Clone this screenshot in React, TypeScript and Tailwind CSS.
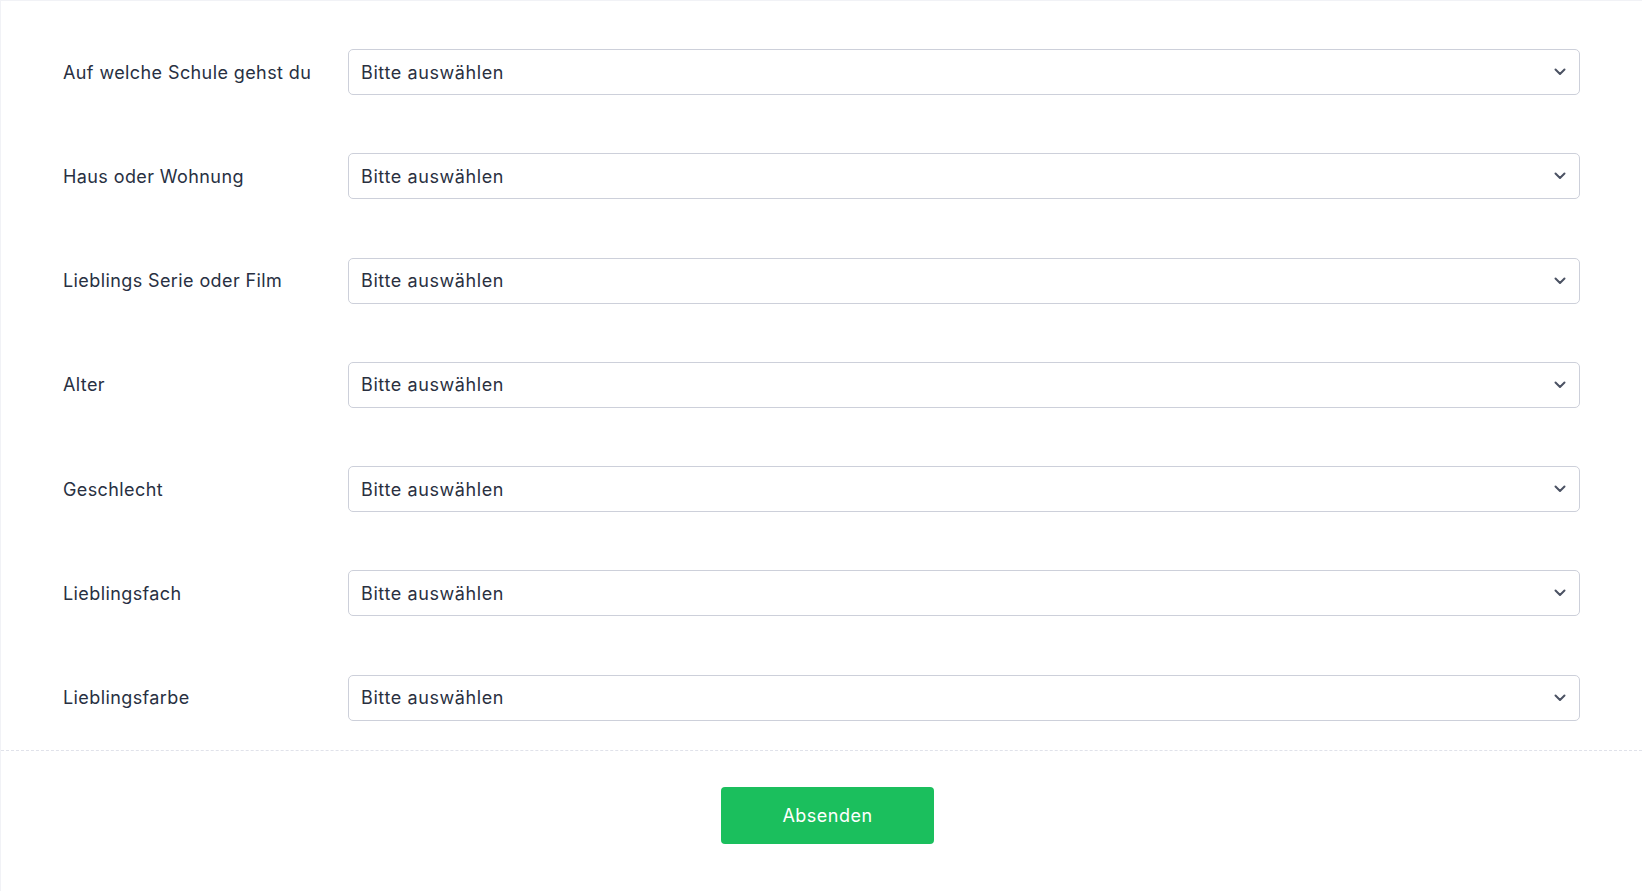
const fields = [
  "Auf welche Schule gehst du",
  "Haus oder Wohnung",
  "Lieblings Serie oder Film",
  "Alter",
  "Geschlecht",
  "Lieblingsfach",
  "Lieblingsfarbe",
];

function Chevron() {
  return (
    <svg width="12" height="8" viewBox="0 0 12 8" fill="none" className="text-[#4b5263]">
      <path d="M1.5 1.5L6 6l4.5-4.5" stroke="currentColor" strokeWidth="2" strokeLinecap="round" strokeLinejoin="round" />
    </svg>
  );
}

export default function App() {
  return (
    <div className="min-h-screen bg-white font-['Inter',sans-serif] border-t border-l border-[#f1f2f6]">
      {/* Fields */}
      <div className="flex flex-col gap-[58.3px] px-[62px] pt-[48px] pb-[29px] border-b border-dashed border-[#e0e2ea]">
        {fields.map((label) => (
          <div key={label} className="flex items-center">
            <label className="w-[285px] shrink-0 text-[18px] font-[430] tracking-[0.4px] text-[#283042]">{label}</label>
            <div className="flex-1 h-[46px] flex items-center justify-between rounded-[5px] border border-[#cdd0da] bg-white pl-[12px] pr-[13px]">
              <span className="text-[18px] tracking-[0.6px] text-[#2a303f]">Bitte auswählen</span>
              <Chevron />
            </div>
          </div>
        ))}
      </div>

      {/* Footer */}
      <div className="flex justify-center pt-[36px] pb-[47px] pl-[12px]">
        <button className="w-[213px] h-[57px] rounded-[4px] bg-[#1bbf5d] text-white text-[18px] font-normal tracking-[0.5px]">
          Absenden
        </button>
      </div>
    </div>
  );
}
